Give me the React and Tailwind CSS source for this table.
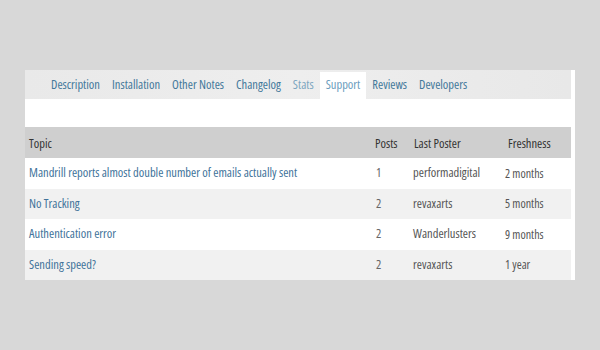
const tabs = [
  { label: "Description" },
  { label: "Installation" },
  { label: "Other Notes" },
  { label: "Changelog" },
  { label: "Stats", muted: true },
  { label: "Support", active: true },
  { label: "Reviews" },
  { label: "Developers" },
];

const rows = [
  { topic: "Mandrill reports almost double number of emails actually sent", posts: "1", poster: "performadigital", fresh: "2 months" },
  { topic: "No Tracking", posts: "2", poster: "revaxarts", fresh: "5 months" },
  { topic: "Authentication error", posts: "2", poster: "Wanderlusters", fresh: "9 months" },
  { topic: "Sending speed?", posts: "2", poster: "revaxarts", fresh: "1 year" },
];

export default function App() {
  return (
    <div className="w-[600px] h-[350px] bg-[#d8d8d8] pt-[70px] pl-[25px] font-['Open_Sans',sans-serif] font-stretch-condensed">
      <div className="w-[550px] bg-white pr-[4px]">
        <div className="h-[29px] flex items-end pl-[20px] bg-gradient-to-r from-[#e9e9e9] via-[#eeeeee] to-[#e8e8e8] text-[12.5px]">
          {tabs.map((t) => (
            <div
              key={t.label}
              className={
                "h-[27px] px-[6px] flex items-center leading-none " +
                (t.active
                  ? "bg-white text-[#6b9dbd]"
                  : t.muted
                  ? "text-[#7ca6c0]"
                  : "text-[#43789a]")
              }
            >
              {t.label}
            </div>
          ))}
        </div>
        <div className="h-[28px]" />
        <div className="grid grid-cols-[346px_39px_95px_66px] h-[31px] items-center pt-[3px] bg-[#cfcfcf] text-[12.5px] text-[#333]">
          <div className="pl-[4px]">Topic</div>
          <div className="pl-[4px]">Posts</div>
          <div className="pl-[4px]">Last Poster</div>
          <div className="pl-[3px]">Freshness</div>
        </div>
        {rows.map((r, i) => (
          <div
            key={i}
            className={
              "grid grid-cols-[346px_39px_95px_66px] items-center text-[12.5px] " +
              (i % 2 === 0 ? "bg-white h-[31px]" : "bg-[#f1f1f1] h-[30px]")
            }
          >
            <div className="pl-[4px] text-[#41739a] whitespace-nowrap">{r.topic}</div>
            <div className="pl-[5px] text-[#666]">{r.posts}</div>
            <div className="pl-[3px] text-[#555]">{r.poster}</div>
            <div className="text-[12px] text-[#555]">{r.fresh}</div>
          </div>
        ))}
      </div>
    </div>
  );
}
